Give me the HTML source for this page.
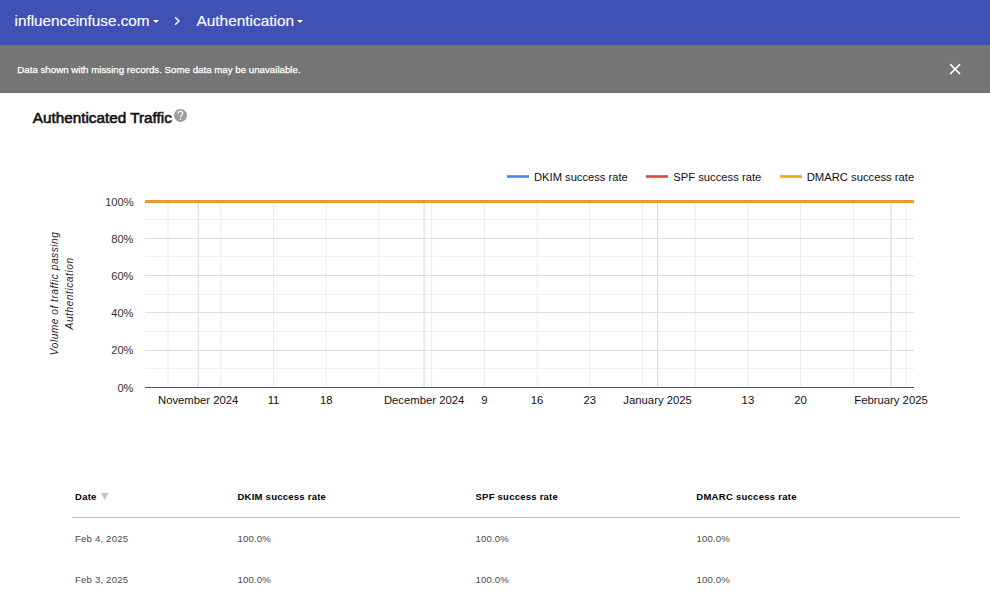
<!DOCTYPE html>
<html>
<head>
<meta charset="utf-8">
<style>
html,body{margin:0;padding:0;width:990px;height:597px;overflow:hidden;background:#fff;}
svg{display:block;}
text{font-family:"Liberation Sans",sans-serif;}
</style>
</head>
<body>
<svg width="990" height="597" viewBox="0 0 990 597">
<rect x="0" y="0" width="990" height="45" fill="#3f51b5"/>
<text x="14.5" y="26" font-size="15.5" fill="#fff" stroke="#fff" stroke-width="0.15" textLength="135" lengthAdjust="spacingAndGlyphs">influenceinfuse.com</text>
<path d="M153 20 L159 20 L156 23 Z" fill="#fff"/>
<path d="M175.1 17.3 L178.9 21.05 L175.1 24.8" fill="none" stroke="#fff" stroke-width="1.5"/>
<text x="196.5" y="26" font-size="15.5" fill="#fff" stroke="#fff" stroke-width="0.15" textLength="97.5" lengthAdjust="spacingAndGlyphs">Authentication</text>
<path d="M297 20 L303 20 L300 23 Z" fill="#fff"/>
<rect x="0" y="45" width="990" height="48" fill="#757575"/>
<rect x="0" y="92" width="990" height="1" fill="#6b6b6b"/>
<text x="17.3" y="73.2" font-size="9.9" fill="#fff" stroke="#fff" stroke-width="0.25" textLength="283.3" lengthAdjust="spacingAndGlyphs">Data shown with missing records. Some data may be unavailable.</text>
<path d="M950.6 64.6 L959.6 73.6 M959.6 64.6 L950.6 73.6" stroke="#fff" stroke-width="1.5" stroke-linecap="round" fill="none"/>
<text x="32.7" y="122.8" font-size="15.3" fill="#111" stroke="#111" stroke-width="0.6" textLength="139.2" lengthAdjust="spacingAndGlyphs">Authenticated Traffic</text>
<circle cx="180.5" cy="115.4" r="6.5" fill="#9e9e9e"/>
<path d="M178.2 113.4 C178.2 112 179.2 111.3 180.5 111.3 C181.8 111.3 182.8 112.1 182.8 113.3 C182.8 114.9 180.6 115.2 180.6 117.3" fill="none" stroke="#fff" stroke-width="1.2"/>
<rect x="180" y="118.6" width="1.2" height="1.2" fill="#fff"/>
<path d="M507 176.5 H529" stroke="#4285f4" stroke-width="2.6"/>
<text x="534" y="181" font-size="11.2" fill="#111" textLength="93.8" lengthAdjust="spacingAndGlyphs">DKIM success rate</text>
<path d="M646 176.5 H668" stroke="#db4437" stroke-width="2.6"/>
<text x="673.3" y="181" font-size="11.2" fill="#111" textLength="88" lengthAdjust="spacingAndGlyphs">SPF success rate</text>
<path d="M780 176.5 H802" stroke="#f4a400" stroke-width="2.6"/>
<text x="806.7" y="181" font-size="11.2" fill="#111" textLength="107.5" lengthAdjust="spacingAndGlyphs">DMARC success rate</text>
<g shape-rendering="crispEdges">
<rect x="145" y="219" width="769" height="1" fill="#f0f0f0"/>
<rect x="145" y="256" width="769" height="1" fill="#f0f0f0"/>
<rect x="145" y="294" width="769" height="1" fill="#f0f0f0"/>
<rect x="145" y="331" width="769" height="1" fill="#f0f0f0"/>
<rect x="145" y="368" width="769" height="1" fill="#f0f0f0"/>
</g>
<rect x="167.54" y="200" width="1" height="187" fill="#ececec"/>
<rect x="220.26" y="200" width="1" height="187" fill="#ececec"/>
<rect x="272.98" y="200" width="1" height="187" fill="#ececec"/>
<rect x="325.69" y="200" width="1" height="187" fill="#ececec"/>
<rect x="378.41" y="200" width="1" height="187" fill="#ececec"/>
<rect x="431.13" y="200" width="1" height="187" fill="#ececec"/>
<rect x="483.84" y="200" width="1" height="187" fill="#ececec"/>
<rect x="536.56" y="200" width="1" height="187" fill="#ececec"/>
<rect x="589.28" y="200" width="1" height="187" fill="#ececec"/>
<rect x="642.00" y="200" width="1" height="187" fill="#ececec"/>
<rect x="694.71" y="200" width="1" height="187" fill="#ececec"/>
<rect x="747.43" y="200" width="1" height="187" fill="#ececec"/>
<rect x="800.15" y="200" width="1" height="187" fill="#ececec"/>
<rect x="852.86" y="200" width="1" height="187" fill="#ececec"/>
<rect x="905.58" y="200" width="1" height="187" fill="#ececec"/>
<g shape-rendering="crispEdges">
<rect x="145" y="238" width="769" height="1" fill="#dcdcdc"/>
<rect x="145" y="275" width="769" height="1" fill="#dcdcdc"/>
<rect x="145" y="312" width="769" height="1" fill="#dcdcdc"/>
<rect x="145" y="350" width="769" height="1" fill="#dcdcdc"/>
</g>
<rect x="197.67" y="200" width="1" height="187" fill="#d6d6d6"/>
<rect x="423.60" y="200" width="1" height="187" fill="#d6d6d6"/>
<rect x="657.06" y="200" width="1" height="187" fill="#d6d6d6"/>
<rect x="890.52" y="200" width="1" height="187" fill="#d6d6d6"/>
<rect x="145" y="387" width="769" height="1" fill="#555"/>
<path d="M145.3 201.6 H913.9" stroke="#4285f4" stroke-width="2.15"/>
<path d="M145.3 201.6 H913.9" stroke="#db4437" stroke-width="2.15"/>
<path d="M145.3 201.6 H913.9" stroke="#f4aa00" stroke-width="2.15"/>
<text x="133.5" y="205.6" font-size="11.1" fill="#333" text-anchor="end">100%</text>
<text x="133.5" y="242.6" font-size="11.1" fill="#333" text-anchor="end">80%</text>
<text x="133.5" y="279.8" font-size="11.1" fill="#333" text-anchor="end">60%</text>
<text x="133.5" y="317.1" font-size="11.1" fill="#333" text-anchor="end">40%</text>
<text x="133.5" y="354.3" font-size="11.1" fill="#333" text-anchor="end">20%</text>
<text x="133.5" y="391.6" font-size="11.1" fill="#333" text-anchor="end">0%</text>
<text x="198.2" y="404.3" font-size="11.3" fill="#111" text-anchor="middle">November 2024</text>
<text x="273.5" y="404.3" font-size="11.3" fill="#111" text-anchor="middle">11</text>
<text x="326.2" y="404.3" font-size="11.3" fill="#111" text-anchor="middle">18</text>
<text x="424.1" y="404.3" font-size="11.3" fill="#111" text-anchor="middle">December 2024</text>
<text x="484.3" y="404.3" font-size="11.3" fill="#111" text-anchor="middle">9</text>
<text x="537.1" y="404.3" font-size="11.3" fill="#111" text-anchor="middle">16</text>
<text x="589.8" y="404.3" font-size="11.3" fill="#111" text-anchor="middle">23</text>
<text x="657.6" y="404.3" font-size="11.3" fill="#111" text-anchor="middle">January 2025</text>
<text x="747.9" y="404.3" font-size="11.3" fill="#111" text-anchor="middle">13</text>
<text x="800.6" y="404.3" font-size="11.3" fill="#111" text-anchor="middle">20</text>
<text x="891.0" y="404.3" font-size="11.3" fill="#111" text-anchor="middle">February 2025</text>
<g transform="translate(58.2,293.7) rotate(-90)"><text x="0" y="0" font-size="10.2" font-style="italic" fill="#222" text-anchor="middle" textLength="123">Volume of traffic passing</text><text x="0" y="15" font-size="10.2" font-style="italic" fill="#222" text-anchor="middle" textLength="71.5">Authentication</text></g>
<text x="75" y="500" font-size="9.5" font-weight="bold" fill="#000" textLength="21.4">Date</text>
<text x="237.5" y="500" font-size="9.5" font-weight="bold" fill="#000" textLength="88.4">DKIM success rate</text>
<text x="475.5" y="500" font-size="9.5" font-weight="bold" fill="#000" textLength="82.3">SPF success rate</text>
<text x="696.3" y="500" font-size="9.5" font-weight="bold" fill="#000" textLength="100.2">DMARC success rate</text>
<path d="M101 493 L108.5 493 L104.75 500 Z" fill="#c4c4c4"/>
<rect x="72" y="517" width="888" height="1" fill="#bdbdbd"/>
<text x="75" y="542" font-size="9.6" fill="#4a4a4a" textLength="53">Feb 4, 2025</text>
<text x="237.5" y="542" font-size="9.6" fill="#4a4a4a" textLength="33.2">100.0%</text>
<text x="475.5" y="542" font-size="9.6" fill="#4a4a4a" textLength="33.2">100.0%</text>
<text x="696.5" y="542" font-size="9.6" fill="#4a4a4a" textLength="33.2">100.0%</text>
<text x="75" y="583" font-size="9.6" fill="#4a4a4a" textLength="53">Feb 3, 2025</text>
<text x="237.5" y="583" font-size="9.6" fill="#4a4a4a" textLength="33.2">100.0%</text>
<text x="475.5" y="583" font-size="9.6" fill="#4a4a4a" textLength="33.2">100.0%</text>
<text x="696.5" y="583" font-size="9.6" fill="#4a4a4a" textLength="33.2">100.0%</text>
</svg>
</body>
</html>
